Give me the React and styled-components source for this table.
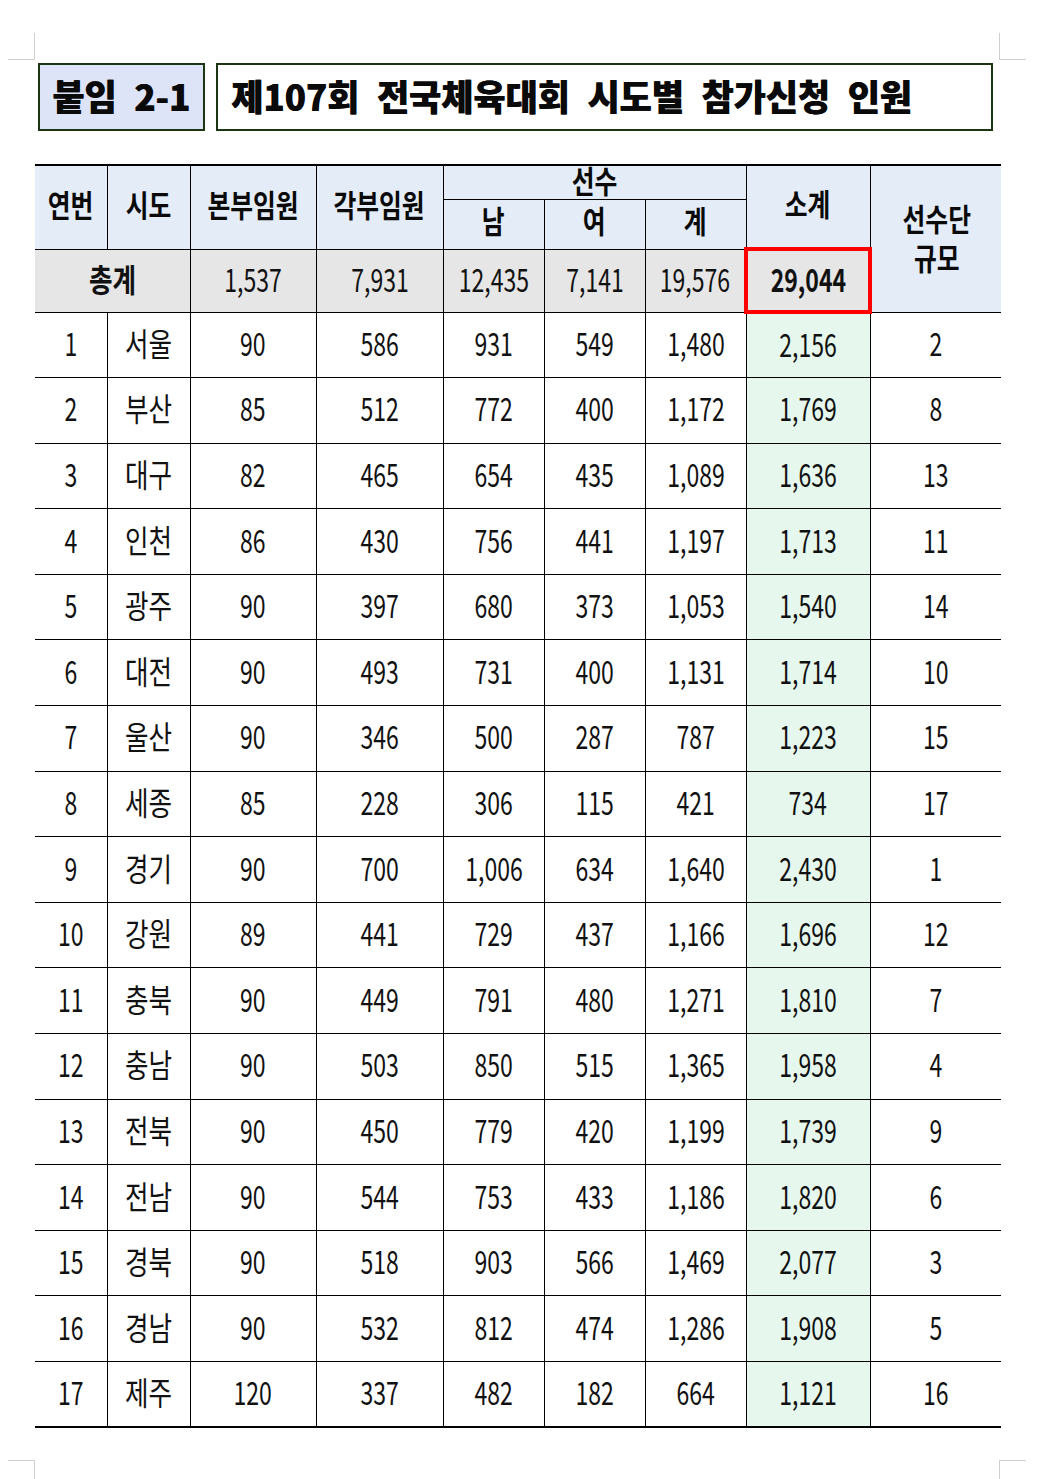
import React from 'react';
import styled, { createGlobalStyle } from 'styled-components';

const rows = [
  [1, '서울', '90', '586', '931', '549', '1,480', '2,156', '2'],
  [2, '부산', '85', '512', '772', '400', '1,172', '1,769', '8'],
  [3, '대구', '82', '465', '654', '435', '1,089', '1,636', '13'],
  [4, '인천', '86', '430', '756', '441', '1,197', '1,713', '11'],
  [5, '광주', '90', '397', '680', '373', '1,053', '1,540', '14'],
  [6, '대전', '90', '493', '731', '400', '1,131', '1,714', '10'],
  [7, '울산', '90', '346', '500', '287', '787', '1,223', '15'],
  [8, '세종', '85', '228', '306', '115', '421', '734', '17'],
  [9, '경기', '90', '700', '1,006', '634', '1,640', '2,430', '1'],
  [10, '강원', '89', '441', '729', '437', '1,166', '1,696', '12'],
  [11, '충북', '90', '449', '791', '480', '1,271', '1,810', '7'],
  [12, '충남', '90', '503', '850', '515', '1,365', '1,958', '4'],
  [13, '전북', '90', '450', '779', '420', '1,199', '1,739', '9'],
  [14, '전남', '90', '544', '753', '433', '1,186', '1,820', '6'],
  [15, '경북', '90', '518', '903', '566', '1,469', '2,077', '3'],
  [16, '경남', '90', '532', '812', '474', '1,286', '1,908', '5'],
  [17, '제주', '120', '337', '482', '182', '664', '1,121', '16'],
];

const totals = ['1,537', '7,931', '12,435', '7,141', '19,576'];
const colWidths = [72, 83, 126, 127, 101, 101, 101, 124, 131];

export default function App() {
  return (
    <Page>
      <GlobalStyle />
      <CropMark $top={33} $left={35} $side="left" />
      <CropMark $top={33} $left={999} $side="right" />
      <CropMark $top={1460} $left={35} $side="left" $flip />
      <CropMark $top={1460} $left={999} $side="right" $flip />

      <TitleRow>
        <Badge>
          <TitleText>붙임 2-1</TitleText>
        </Badge>
        <TitleBox>
          <TitleText>제107회 전국체육대회 시도별 참가신청 인원</TitleText>
        </TitleBox>
      </TitleRow>

      <Table>
        <colgroup>
          {colWidths.map((w, i) => (
            <col key={i} style={{ width: w }} />
          ))}
        </colgroup>
        <thead>
          <HeadRow $h={34}>
            <Th rowSpan={2} $first><Txt $up={4}>연번</Txt></Th>
            <Th rowSpan={2}><Txt $up={4}>시도</Txt></Th>
            <Th rowSpan={2}><Txt $up={4}>본부임원</Txt></Th>
            <Th rowSpan={2}><Txt $up={4}>각부임원</Txt></Th>
            <Th colSpan={3}><Txt $up={3}>선수</Txt></Th>
            <Th rowSpan={2}><Txt $up={4}>소계</Txt></Th>
            <Th rowSpan={3} $last><Txt $up={2}>선수단<br />규모</Txt></Th>
          </HeadRow>
          <HeadRow $h={50}>
            <Th><Txt $up={5}>남</Txt></Th>
            <Th><Txt $up={5}>여</Txt></Th>
            <Th><Txt $up={5}>계</Txt></Th>
          </HeadRow>
          <TotalRow>
            <Td colSpan={2} $bold $first><Txt $up={3}>총계</Txt></Td>
            {totals.map((t, i) => (
              <Td key={i}><Num>{t}</Num></Td>
            ))}
            <Td $bold $marked><Num>29,044</Num></Td>
          </TotalRow>
        </thead>
        <tbody>
          {rows.map((r) => (
            <BodyRow key={r[0]}>
              <Td $first><Num>{r[0]}</Num></Td>
              <Td><Txt $up={3}>{r[1]}</Txt></Td>
              {r.slice(2, 7).map((v, i) => (
                <Td key={i}><Num>{v}</Num></Td>
              ))}
              <Td $green><Num>{r[7]}</Num></Td>
              <Td $last><Num>{r[8]}</Num></Td>
            </BodyRow>
          ))}
        </tbody>
      </Table>
    </Page>
  );
}

const GlobalStyle = createGlobalStyle`
  body {
    margin: 0;
    background: #fff;
    font-family: "Noto Sans CJK KR", "Noto Sans", sans-serif;
    color: #111;
  }
`;

const Page = styled.div`
  position: relative;
  width: 1039px;
  height: 1479px;
  padding-top: 63px;
  box-sizing: border-box;
  overflow: hidden;
`;

const CropMark = styled.div`
  position: absolute;
  top: ${(p) => p.$top}px;
  left: ${(p) => (p.$side === 'left' ? p.$left - 27 : p.$left)}px;
  width: 27px;
  height: 27px;
  box-sizing: border-box;
  border-color: #cfcfcf;
  border-style: solid;
  border-width: 0;
  ${(p) => (p.$flip ? 'border-top-width: 1px;' : 'border-bottom-width: 1px;')}
  ${(p) => (p.$side === 'left' ? 'border-right-width: 1px;' : 'border-left-width: 1px;')}
`;

const TitleRow = styled.div`
  display: flex;
  gap: 11px;
  margin-left: 38px;
`;

const Box = styled.div`
  height: 68px;
  box-sizing: border-box;
  border: 2.5px solid #1c3614;
  display: flex;
  align-items: center;
  padding-bottom: 4px;
`;

const Badge = styled(Box)`
  width: 167px;
  background: #dee4f8;
  justify-content: center;
`;

const TitleBox = styled(Box)`
  width: 777px;
  background: #fff;
  padding-left: 13px;
`;

const TitleText = styled.span`
  font-size: 36px;
  font-weight: 900;
  line-height: 1;
  color: #0a0a0a;
  word-spacing: 10px;
  white-space: nowrap;
  display: inline-block;
  transform: scaleX(0.97);
  transform-origin: left center;
  text-shadow: 0.7px 0 0 #0a0a0a;
  ${Badge} & {
    transform-origin: center;
  }
`;

const Table = styled.table`
  margin-top: 33px;
  margin-left: 35px;
  width: 966px;
  table-layout: fixed;
  border-collapse: collapse;
  border-top: 2px solid #000;
  border-bottom: 2.5px solid #000;
`;

const HeadRow = styled.tr`
  height: ${(p) => p.$h}px;
`;

const TotalRow = styled.tr`
  height: 63px;
  background: #e6e6e6;
`;

const BodyRow = styled.tr`
  height: 65.6px;
`;

const cellBase = `
  border: 1px solid #000;
  padding: 0;
  text-align: center;
  vertical-align: middle;
  line-height: 1;
  white-space: nowrap;
`;

const Th = styled.th`
  ${cellBase}
  background: #e4ecf7;
  font-size: 31px;
  font-weight: 700;
  color: #0a0a0a;
  ${(p) => p.$first && 'border-left: none;'}
  ${(p) => p.$last && 'border-right: none; line-height: 39px;'}
`;

const Td = styled.td`
  ${cellBase}
  font-size: 32px;
  font-weight: ${(p) => (p.$bold ? 700 : 400)};
  ${(p) => p.$first && 'border-left: none;'}
  ${(p) => p.$last && 'border-right: none;'}
  ${(p) => p.$green && 'background: #e6f8ee;'}
  ${(p) => p.$marked && 'border: 4px solid #ff0000;'}
`;

const Txt = styled.span`
  display: inline-block;
  transform: translateY(-${(p) => p.$up || 0}px) scaleX(0.8);
`;

const Num = styled.span`
  display: inline-block;
  transform: translateY(-3px) scaleX(0.72);
`;
